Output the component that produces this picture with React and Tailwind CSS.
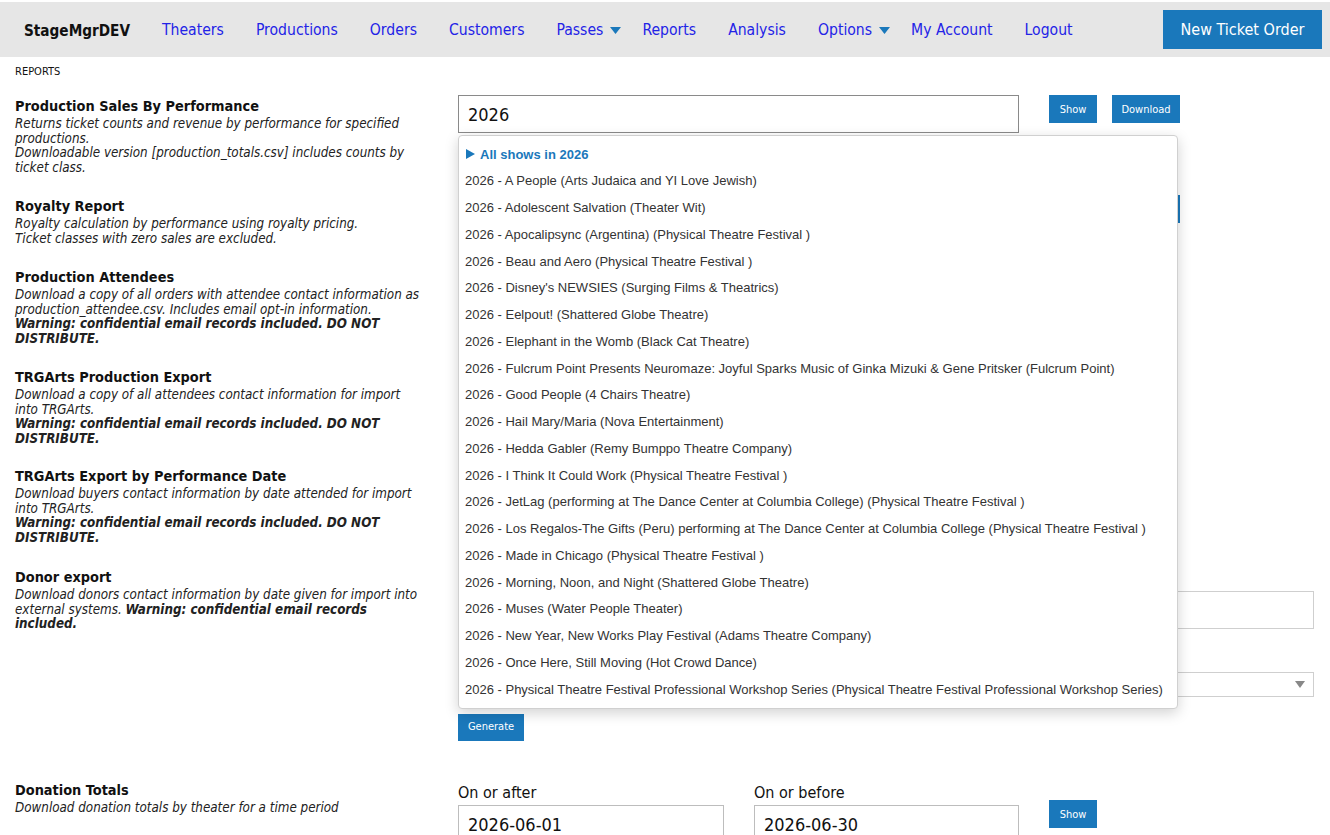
import React from "react";

const FONT = { fontFamily: '"DejaVu Sans Condensed", "DejaVu Sans", Verdana, sans-serif' };
const ARIAL = { fontFamily: '"Liberation Sans", Arial, sans-serif' };

const shows = [
  "2026 - A People (Arts Judaica and YI Love Jewish)",
  "2026 - Adolescent Salvation (Theater Wit)",
  "2026 - Apocalipsync (Argentina) (Physical Theatre Festival )",
  "2026 - Beau and Aero (Physical Theatre Festival )",
  "2026 - Disney's NEWSIES (Surging Films & Theatrics)",
  "2026 - Eelpout! (Shattered Globe Theatre)",
  "2026 - Elephant in the Womb (Black Cat Theatre)",
  "2026 - Fulcrum Point Presents Neuromaze: Joyful Sparks Music of Ginka Mizuki & Gene Pritsker (Fulcrum Point)",
  "2026 - Good People (4 Chairs Theatre)",
  "2026 - Hail Mary/Maria (Nova Entertainment)",
  "2026 - Hedda Gabler (Remy Bumppo Theatre Company)",
  "2026 - I Think It Could Work (Physical Theatre Festival )",
  "2026 - JetLag (performing at The Dance Center at Columbia College) (Physical Theatre Festival )",
  "2026 - Los Regalos-The Gifts (Peru) performing at The Dance Center at Columbia College (Physical Theatre Festival )",
  "2026 - Made in Chicago (Physical Theatre Festival )",
  "2026 - Morning, Noon, and Night (Shattered Globe Theatre)",
  "2026 - Muses (Water People Theater)",
  "2026 - New Year, New Works Play Festival (Adams Theatre Company)",
  "2026 - Once Here, Still Moving (Hot Crowd Dance)",
  "2026 - Physical Theatre Festival Professional Workshop Series (Physical Theatre Festival Professional Workshop Series)",
];

function Caret() {
  return (
    <svg width="11" height="8" viewBox="0 0 11 8" className="ml-[7px] mr-[5px]">
      <polygon points="0,0 11,0 5.5,7" fill="#1a78bb" />
    </svg>
  );
}

function NavLink({ children, caret }) {
  return (
    <a className={`flex items-center ${caret ? "pl-4" : "px-4"} text-[15.6px] text-[#2323e6] whitespace-nowrap`}>
      {children}
      {caret && <Caret />}
    </a>
  );
}

function SmallBtn({ children, w }) {
  return (
    <button className={`h-[28px] ${w} bg-[#1a78bb] text-white text-[11px] leading-none`} style={FONT}>
      {children}
    </button>
  );
}

function Heading({ children }) {
  return <div className="text-[14.4px] font-bold leading-[17px] mb-[2px] text-[#111]">{children}</div>;
}

function Desc({ children }) {
  return <div className="text-[13.3px] italic leading-[14.5px] text-[#222] whitespace-nowrap">{children}</div>;
}

export default function App() {
  return (
    <div className="w-[1330px] h-[835px] overflow-hidden bg-white relative" style={FONT}>
      {/* Nav */}
      <div className="mt-[2px] h-[55px] bg-[#e6e6e6] flex items-center">
        <div className="pl-[24px] pr-[16px] pt-[3px] text-[15.2px] font-bold text-[#111]">StageMgrDEV</div>
        <div className="flex items-center pt-[3px]">
          <NavLink>Theaters</NavLink>
          <NavLink>Productions</NavLink>
          <NavLink>Orders</NavLink>
          <NavLink>Customers</NavLink>
          <NavLink caret>Passes</NavLink>
          <NavLink>Reports</NavLink>
          <NavLink>Analysis</NavLink>
          <NavLink caret>Options</NavLink>
          <NavLink>My Account</NavLink>
          <NavLink>Logout</NavLink>
        </div>
        <div className="flex-1" />
        <button className="mr-[8px] h-[39px] w-[159px] bg-[#1a78bb] text-white text-[16px]">New Ticket Order</button>
      </div>

      <div className="pl-[15px] pt-[8px] text-[11px] text-[#111] leading-[13px]">REPORTS</div>

      {/* Rows */}
      <div className="mt-[17px] flex flex-col">
        {/* Production sales */}
        <div className="h-[100px] flex">
          <div className="w-[443px] pl-[15px] pt-[3px]">
            <Heading>Production Sales By Performance</Heading>
            <Desc>
              Returns ticket counts and revenue by performance for specified<br />
              productions.<br />
              Downloadable version [production_totals.csv] includes counts by<br />
              ticket class.
            </Desc>
          </div>
          <div className="pl-[15px] flex items-start">
            <div className="w-[561px] h-[38px] border border-[#8a8a8a] flex items-center pl-[9px] text-[18px] text-[#111]">2026</div>
            <div className="ml-[30px] flex gap-[15px]">
              <SmallBtn w="w-[48px]">Show</SmallBtn>
              <SmallBtn w="w-[68px]">Download</SmallBtn>
            </div>
          </div>
        </div>

        {/* Royalty */}
        <div className="h-[71px] flex">
          <div className="w-[443px] pl-[15px] pt-[3px]">
            <Heading>Royalty Report</Heading>
            <Desc>
              Royalty calculation by performance using royalty pricing.<br />
              Ticket classes with zero sales are excluded.
            </Desc>
          </div>
          <div className="pl-[15px] flex items-start">
            <div className="w-[561px] h-[38px] border border-[#8a8a8a]" />
            <div className="ml-[30px] flex gap-[15px]">
              <SmallBtn w="w-[48px]">Show</SmallBtn>
              <SmallBtn w="w-[68px]">Download</SmallBtn>
            </div>
          </div>
        </div>

        {/* Attendees */}
        <div className="h-[100px] flex">
          <div className="w-[443px] pl-[15px] pt-[3px]">
            <Heading>Production Attendees</Heading>
            <Desc>
              Download a copy of all orders with attendee contact information as<br />
              production_attendee.csv. Includes email opt-in information.<br />
              <b>Warning: confidential email records included. DO NOT<br />DISTRIBUTE.</b>
            </Desc>
          </div>
        </div>

        {/* TRGArts production */}
        <div className="h-[99px] flex">
          <div className="w-[443px] pl-[15px] pt-[3px]">
            <Heading>TRGArts Production Export</Heading>
            <Desc>
              Download a copy of all attendees contact information for import<br />
              into TRGArts.<br />
              <b>Warning: confidential email records included. DO NOT<br />DISTRIBUTE.</b>
            </Desc>
          </div>
        </div>

        {/* TRGArts by date */}
        <div className="h-[101px] flex">
          <div className="w-[443px] pl-[15px] pt-[3px]">
            <Heading>TRGArts Export by Performance Date</Heading>
            <Desc>
              Download buyers contact information by date attended for import<br />
              into TRGArts.<br />
              <b>Warning: confidential email records included. DO NOT<br />DISTRIBUTE.</b>
            </Desc>
          </div>
        </div>

        {/* Donor export */}
        <div className="h-[213px] flex">
          <div className="w-[443px] pl-[15px] pt-[3px]">
            <Heading>Donor export</Heading>
            <Desc>
              Download donors contact information by date given for import into<br />
              external systems. <b>Warning: confidential email records</b><br />
              <b>included.</b>
            </Desc>
          </div>
          <div className="pl-[15px] pt-[25px] flex flex-col items-start">
            <div className="w-[856px] h-[38px] border border-[#cfcfcf]" />
            <div className="mt-[43px] w-[856px] h-[25px] border border-[#cfcfcf] flex items-center justify-end pr-[8px]">
              <svg width="10" height="7" viewBox="0 0 10 7"><polygon points="0,0 10,0 5,7" fill="#888" /></svg>
            </div>
            <button className="mt-[17px] h-[27px] w-[66px] bg-[#1a78bb] text-white text-[11px]">Generate</button>
          </div>
        </div>

        {/* Donation totals */}
        <div className="h-[60px] flex">
          <div className="w-[443px] pl-[15px] pt-[3px]">
            <Heading>Donation Totals</Heading>
            <Desc>Download donation totals by theater for a time period</Desc>
          </div>
          <div className="pl-[15px] pt-[5px] flex items-start">
            <div className="flex flex-col">
              <div className="text-[16px] leading-[18px] text-[#111]">On or after</div>
              <div className="mt-[3px] w-[266px] h-[38px] border border-[#bdbdbd] flex items-center pl-[9px] text-[18px] text-[#111]">2026-06-01</div>
            </div>
            <div className="ml-[30px] flex flex-col">
              <div className="text-[16px] leading-[18px] text-[#111]">On or before</div>
              <div className="mt-[3px] w-[265px] h-[38px] border border-[#bdbdbd] flex items-center pl-[9px] text-[18px] text-[#111]">2026-06-30</div>
            </div>
            <div className="ml-[30px] mt-[16px]">
              <SmallBtn w="w-[48px]">Show</SmallBtn>
            </div>
          </div>
        </div>
      </div>

      {/* Autocomplete dropdown */}
      <div
        className="absolute left-[458px] top-[135px] w-[720px] bg-white border border-[#d0d0d0] rounded-[4px] py-[5px] shadow-[0_4px_14px_rgba(0,0,0,0.18)]"
        style={ARIAL}
      >
        <div className="h-[26.75px] flex items-center pl-[7px] text-[13px] font-bold text-[#1a78bb]">
          <svg width="9" height="10" viewBox="0 0 9 10" className="mr-[5px]">
            <polygon points="0,0 9,5 0,10" fill="#1a78bb" />
          </svg>
          All shows in 2026
        </div>
        {shows.map((s) => (
          <div key={s} className="h-[26.75px] flex items-center pl-[6px] text-[13px] text-[#333] whitespace-nowrap">
            {s}
          </div>
        ))}
      </div>
    </div>
  );
}
